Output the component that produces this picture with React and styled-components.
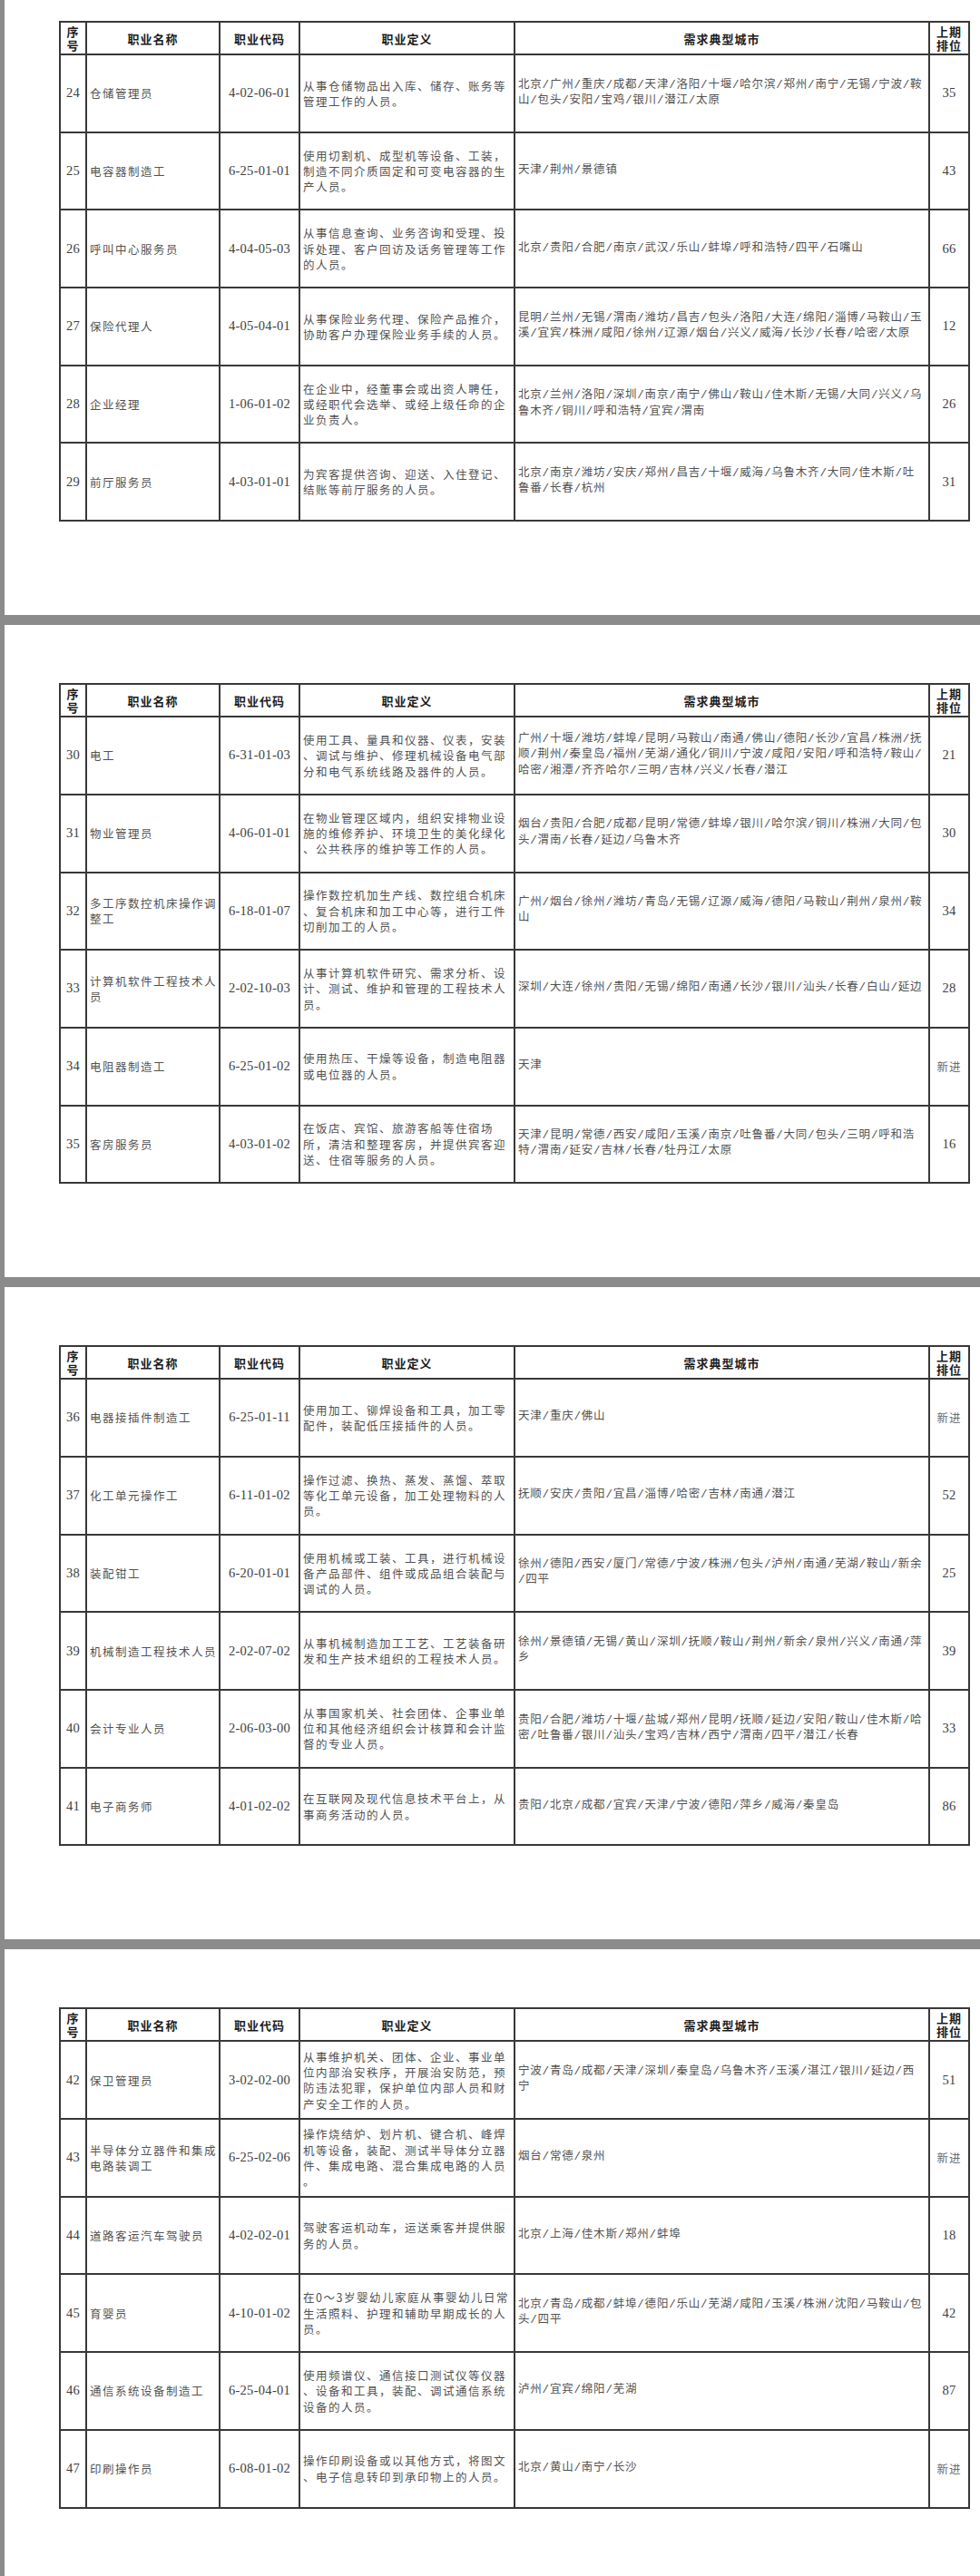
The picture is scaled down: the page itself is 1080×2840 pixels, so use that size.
import React from 'react';
import styled, { createGlobalStyle } from 'styled-components';

const GlobalStyle = createGlobalStyle`
  html, body {
    margin: 0;
    padding: 0;
    background: #8b8b8b;
    overflow: hidden;
  }
  #root { height: 2840px; }
`;

const Viewport = styled.div`
  display: flex;
  flex-direction: column;
  gap: 11px;
  height: 2840px;
  padding-left: 5px;
  box-sizing: border-box;
  background: #8b8b8b;
`;

const Sheet = styled.section`
  background: #ffffff;
  padding: ${(p) => p.$top}px 0 ${(p) => (p.$last ? 0 : 103)}px 60px;
  flex: ${(p) => (p.$last ? '1 1 auto' : '0 0 auto')};
`;

const Table = styled.table`
  width: 1002px;
  border-collapse: collapse;
  table-layout: fixed;
  border: 2px solid #383838;
`;

const Col = styled.col`
  width: ${(p) => p.$w}px;
`;

const HeadRow = styled.tr`
  height: 36px;
`;

const BodyRow = styled.tr`
  height: 85.7px;
`;

const HeadCell = styled.th`
  border: 2px solid #383838;
  padding: 0;
  font-family: "Noto Sans CJK SC", sans-serif;
  font-weight: 700;
  font-size: 13px;
  line-height: 15px;
  letter-spacing: 1px;
  color: #1c1c1c;
  text-align: center;
  vertical-align: middle;
`;

const fontFor = {
  num: '"Liberation Serif", "Noto Sans CJK SC", serif',
  text: '"Noto Sans CJK SC", sans-serif',
  city: '"Liberation Mono", "Noto Sans CJK SC", monospace',
  rank: '"Liberation Serif", "Noto Sans CJK SC", serif',
};

const spacingFor = {
  num: '0.3px',
  text: '1.5px',
  city: '0.8px',
  rank: '0.3px',
};

const Cell = styled.td`
  border: 2px solid #383838;
  padding: ${(p) => (p.$kind === 'text' || p.$kind === 'city' ? '0 0 0 3px' : '0')};
  vertical-align: middle;
  text-align: ${(p) => (p.$kind === 'text' || p.$kind === 'city' ? 'left' : 'center')};
  font-family: ${(p) => fontFor[p.$kind]};
  font-size: ${(p) => (p.$kind === 'num' || p.$kind === 'rank' ? '14.5px' : '12.5px')};
  letter-spacing: ${(p) => spacingFor[p.$kind]};
  line-height: 17.3px;
  color: ${(p) => (p.$kind === 'num' || p.$kind === 'rank' ? '#3e3e3e' : '#525252')};
`;

const Line = styled.span`
  display: block;
  white-space: nowrap;
`;

const NewTag = styled.span`
  font-family: "Noto Sans CJK SC", sans-serif;
  font-size: 12.5px;
  letter-spacing: 1px;
  color: #6a6a6a;
`;

const pages = [
  [
    ['24', ['仓储管理员'], '4-02-06-01', ['从事仓储物品出入库、储存、账务等', '管理工作的人员。'], ['北京/广州/重庆/成都/天津/洛阳/十堰/哈尔滨/郑州/南宁/无锡/宁波/鞍', '山/包头/安阳/宝鸡/银川/潜江/太原'], '35'],
    ['25', ['电容器制造工'], '6-25-01-01', ['使用切割机、成型机等设备、工装，', '制造不同介质固定和可变电容器的生', '产人员。'], ['天津/荆州/景德镇'], '43'],
    ['26', ['呼叫中心服务员'], '4-04-05-03', ['从事信息查询、业务咨询和受理、投', '诉处理、客户回访及话务管理等工作', '的人员。'], ['北京/贵阳/合肥/南京/武汉/乐山/蚌埠/呼和浩特/四平/石嘴山'], '66'],
    ['27', ['保险代理人'], '4-05-04-01', ['从事保险业务代理、保险产品推介，', '协助客户办理保险业务手续的人员。'], ['昆明/兰州/无锡/渭南/潍坊/昌吉/包头/洛阳/大连/绵阳/淄博/马鞍山/玉', '溪/宜宾/株洲/咸阳/徐州/辽源/烟台/兴义/威海/长沙/长春/哈密/太原'], '12'],
    ['28', ['企业经理'], '1-06-01-02', ['在企业中，经董事会或出资人聘任，', '或经职代会选举、或经上级任命的企', '业负责人。'], ['北京/兰州/洛阳/深圳/南京/南宁/佛山/鞍山/佳木斯/无锡/大同/兴义/乌', '鲁木齐/铜川/呼和浩特/宜宾/渭南'], '26'],
    ['29', ['前厅服务员'], '4-03-01-01', ['为宾客提供咨询、迎送、入住登记、', '结账等前厅服务的人员。'], ['北京/南京/潍坊/安庆/郑州/昌吉/十堰/威海/乌鲁木齐/大同/佳木斯/吐', '鲁番/长春/杭州'], '31'],
  ],
  [
    ['30', ['电工'], '6-31-01-03', ['使用工具、量具和仪器、仪表，安装', '、调试与维护、修理机械设备电气部', '分和电气系统线路及器件的人员。'], ['广州/十堰/潍坊/蚌埠/昆明/马鞍山/南通/佛山/德阳/长沙/宜昌/株洲/抚', '顺/荆州/秦皇岛/福州/芜湖/通化/铜川/宁波/咸阳/安阳/呼和浩特/鞍山/', '哈密/湘潭/齐齐哈尔/三明/吉林/兴义/长春/潜江'], '21'],
    ['31', ['物业管理员'], '4-06-01-01', ['在物业管理区域内，组织安排物业设', '施的维修养护、环境卫生的美化绿化', '、公共秩序的维护等工作的人员。'], ['烟台/贵阳/合肥/成都/昆明/常德/蚌埠/银川/哈尔滨/铜川/株洲/大同/包', '头/渭南/长春/延边/乌鲁木齐'], '30'],
    ['32', ['多工序数控机床操作调', '整工'], '6-18-01-07', ['操作数控机加生产线、数控组合机床', '、复合机床和加工中心等，进行工件', '切削加工的人员。'], ['广州/烟台/徐州/潍坊/青岛/无锡/辽源/威海/德阳/马鞍山/荆州/泉州/鞍', '山'], '34'],
    ['33', ['计算机软件工程技术人', '员'], '2-02-10-03', ['从事计算机软件研究、需求分析、设', '计、测试、维护和管理的工程技术人', '员。'], ['深圳/大连/徐州/贵阳/无锡/绵阳/南通/长沙/银川/汕头/长春/白山/延边'], '28'],
    ['34', ['电阻器制造工'], '6-25-01-02', ['使用热压、干燥等设备，制造电阻器', '或电位器的人员。'], ['天津'], '新进'],
    ['35', ['客房服务员'], '4-03-01-02', ['在饭店、宾馆、旅游客船等住宿场', '所，清洁和整理客房，并提供宾客迎', '送、住宿等服务的人员。'], ['天津/昆明/常德/西安/咸阳/玉溪/南京/吐鲁番/大同/包头/三明/呼和浩', '特/渭南/延安/吉林/长春/牡丹江/太原'], '16'],
  ],
  [
    ['36', ['电器接插件制造工'], '6-25-01-11', ['使用加工、铆焊设备和工具，加工零', '配件，装配低压接插件的人员。'], ['天津/重庆/佛山'], '新进'],
    ['37', ['化工单元操作工'], '6-11-01-02', ['操作过滤、换热、蒸发、蒸馏、萃取', '等化工单元设备，加工处理物料的人', '员。'], ['抚顺/安庆/贵阳/宜昌/淄博/哈密/吉林/南通/潜江'], '52'],
    ['38', ['装配钳工'], '6-20-01-01', ['使用机械或工装、工具，进行机械设', '备产品部件、组件或成品组合装配与', '调试的人员。'], ['徐州/德阳/西安/厦门/常德/宁波/株洲/包头/泸州/南通/芜湖/鞍山/新余', '/四平'], '25'],
    ['39', ['机械制造工程技术人员'], '2-02-07-02', ['从事机械制造加工工艺、工艺装备研', '发和生产技术组织的工程技术人员。'], ['徐州/景德镇/无锡/黄山/深圳/抚顺/鞍山/荆州/新余/泉州/兴义/南通/萍', '乡'], '39'],
    ['40', ['会计专业人员'], '2-06-03-00', ['从事国家机关、社会团体、企事业单', '位和其他经济组织会计核算和会计监', '督的专业人员。'], ['贵阳/合肥/潍坊/十堰/盐城/郑州/昆明/抚顺/延边/安阳/鞍山/佳木斯/哈', '密/吐鲁番/银川/汕头/宝鸡/吉林/西宁/渭南/四平/潜江/长春'], '33'],
    ['41', ['电子商务师'], '4-01-02-02', ['在互联网及现代信息技术平台上，从', '事商务活动的人员。'], ['贵阳/北京/成都/宜宾/天津/宁波/德阳/萍乡/威海/秦皇岛'], '86'],
  ],
  [
    ['42', ['保卫管理员'], '3-02-02-00', ['从事维护机关、团体、企业、事业单', '位内部治安秩序，开展治安防范，预', '防违法犯罪，保护单位内部人员和财', '产安全工作的人员。'], ['宁波/青岛/成都/天津/深圳/秦皇岛/乌鲁木齐/玉溪/湛江/银川/延边/西', '宁'], '51'],
    ['43', ['半导体分立器件和集成', '电路装调工'], '6-25-02-06', ['操作烧结炉、划片机、键合机、峰焊', '机等设备，装配、测试半导体分立器', '件、集成电路、混合集成电路的人员', '。'], ['烟台/常德/泉州'], '新进'],
    ['44', ['道路客运汽车驾驶员'], '4-02-02-01', ['驾驶客运机动车，运送乘客并提供服', '务的人员。'], ['北京/上海/佳木斯/郑州/蚌埠'], '18'],
    ['45', ['育婴员'], '4-10-01-02', ['在0～3岁婴幼儿家庭从事婴幼儿日常', '生活照料、护理和辅助早期成长的人', '员。'], ['北京/青岛/成都/蚌埠/德阳/乐山/芜湖/咸阳/玉溪/株洲/沈阳/马鞍山/包', '头/四平'], '42'],
    ['46', ['通信系统设备制造工'], '6-25-04-01', ['使用频谱仪、通信接口测试仪等仪器', '、设备和工具，装配、调试通信系统', '设备的人员。'], ['泸州/宜宾/绵阳/芜湖'], '87'],
    ['47', ['印刷操作员'], '6-08-01-02', ['操作印刷设备或以其他方式，将图文', '、电子信息转印到承印物上的人员。'], ['北京/黄山/南宁/长沙'], '新进'],
  ],
];

const widths = [29, 147, 88, 237, 457, 44];

function Lines({ items }) {
  return items.map((t, i) => <Line key={i}>{t}</Line>);
}

function JobTable({ rows }) {
  return (
    <Table>
      <colgroup>
        {widths.map((w, i) => (
          <Col key={i} $w={w} />
        ))}
      </colgroup>
      <thead>
        <HeadRow>
          <HeadCell>序<br />号</HeadCell>
          <HeadCell>职业名称</HeadCell>
          <HeadCell>职业代码</HeadCell>
          <HeadCell>职业定义</HeadCell>
          <HeadCell>需求典型城市</HeadCell>
          <HeadCell>上期<br />排位</HeadCell>
        </HeadRow>
      </thead>
      <tbody>
        {rows.map(([no, name, code, def, cities, rank]) => (
          <BodyRow key={no}>
            <Cell $kind="num">{no}</Cell>
            <Cell $kind="text"><Lines items={name} /></Cell>
            <Cell $kind="num">{code}</Cell>
            <Cell $kind="text"><Lines items={def} /></Cell>
            <Cell $kind="city"><Lines items={cities} /></Cell>
            <Cell $kind="rank">{rank === '新进' ? <NewTag>新进</NewTag> : rank}</Cell>
          </BodyRow>
        ))}
      </tbody>
    </Table>
  );
}

export default function App() {
  return (
    <>
      <GlobalStyle />
      <Viewport>
        {pages.map((rows, i) => (
          <Sheet key={i} $top={i === 0 ? 23 : 64} $last={i === pages.length - 1}>
            <JobTable rows={rows} />
          </Sheet>
        ))}
      </Viewport>
    </>
  );
}
